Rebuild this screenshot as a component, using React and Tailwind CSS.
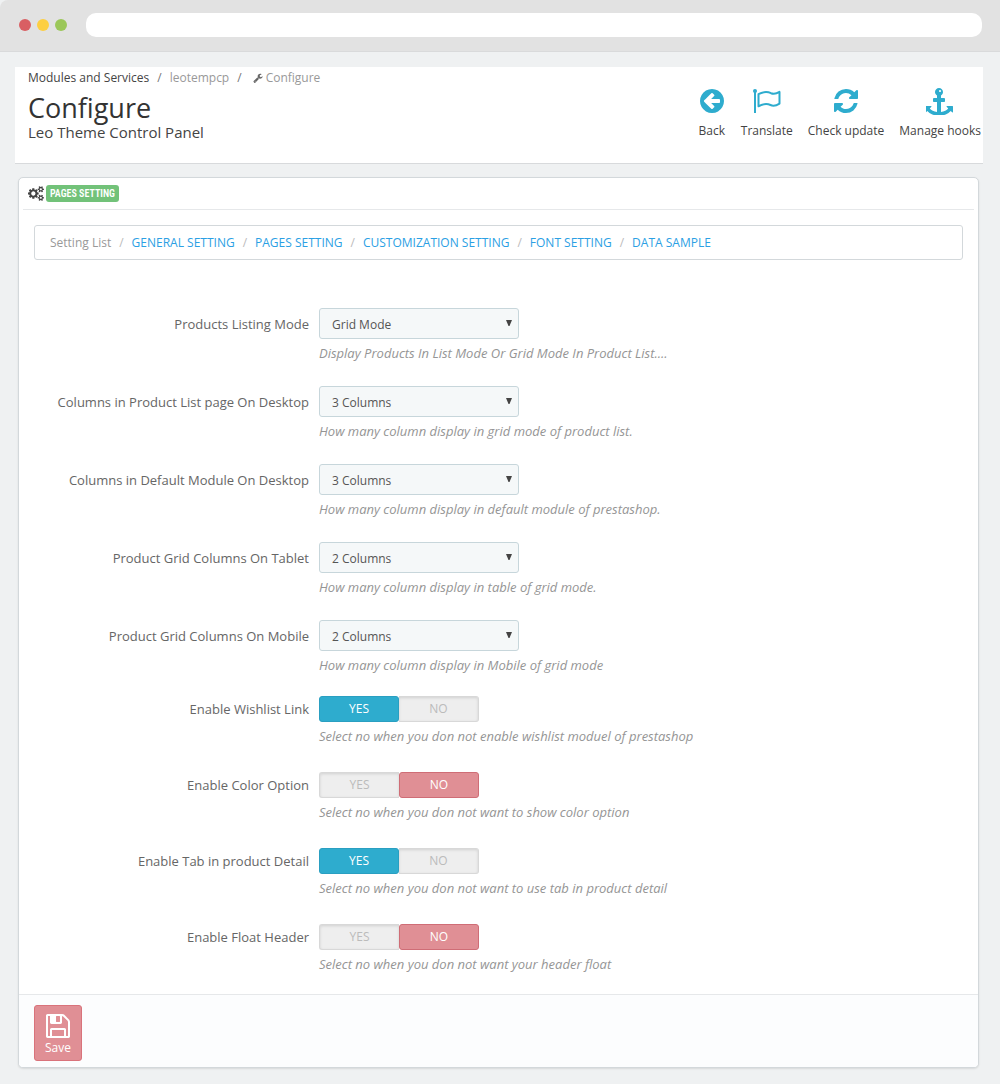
import { useState } from "react";

const ICON_PATHS = {
    back: "M1408 960v-128q0-26-19-45t-45-19h-502l189-189q19-19 19-45t-19-45l-91-91q-18-18-45-18t-45 18l-362 362-91 91q-18 18-18 45t18 45l91 91 362 362q18 18 45 18t45-18l91-91q18-18 18-45t-18-45l-189-189h502q26 0 45-19t19-45zm256-64q0 209-103 385.5t-279.5 279.5-385.5 103-385.5-103-279.5-279.5-103-385.5 103-385.5 279.5-279.5 385.5-103 385.5 103 279.5 279.5 103 385.5z",
    refresh: "M1639 1056q0 5-1 7-64 268-268 434.5t-478 166.5q-146 0-282.5-55t-243.5-157l-129 129q-19 19-45 19t-45-19-19-45v-448q0-26 19-45t45-19h448q26 0 45 19t19 45-19 45l-137 137q71 66 161 102t187 36q134 0 250-65t186-179q11-17 53-117 8-23 30-23h192q13 0 22.5 9.5t9.5 22.5zm25-800v448q0 26-19 45t-45 19h-448q-26 0-45-19t-19-45 19-45l138-138q-148-137-349-137-134 0-250 65t-186 179q-11 17-53 117-8 23-30 23h-199q-13 0-22.5-9.5t-9.5-22.5v-7q65-268 270-434.5t480-166.5q146 0 284 55.5t245 156.5l130-129q19-19 45-19t45 19 19 45z",
    anchor: "M960 256q0-26-19-45t-45-19-45 19-19 45 19 45 45 19 45-19 19-45zm768 992v352q0 22-20 30-8 2-12 2-12 0-23-9l-93-93q-119 143-318.5 226.5t-429.5 83.5-429.5-83.5-318.5-226.5l-93 93q-9 9-23 9-4 0-12-2-20-8-20-30v-352q0-14 9-23t23-9h352q22 0 30 20 8 19-7 35l-100 100q67 91 189.5 153.5t271.5 82.5v-647h-192q-26 0-45-19t-19-45v-128q0-26 19-45t45-19h192v-163q-58-34-93-92.5t-35-128.5q0-106 75-181t181-75 181 75 75 181q0 70-35 128.5t-93 92.5v163h192q26 0 45 19t19 45v128q0 26-19 45t-45 19h-192v647q149-20 271.5-82.5t189.5-153.5l-100-100q-15-16-7-35 8-20 30-20h352q14 0 23 9t9 23z",
    save: "M512 1536h768v-384h-768v384zm896 0h128v-896q0-14-10-38.5t-20-34.5l-281-281q-10-10-34-20t-39-10v416q0 40-28 68t-68 28h-576q-40 0-68-28t-28-68v-416h-128v1280h128v-416q0-40 28-68t68-28h832q40 0 68 28t28 68v416zm-384-928v-320q0-13-9.5-22.5t-22.5-9.5h-192q-13 0-22.5 9.5t-9.5 22.5v320q0 13 9.5 22.5t22.5 9.5h192q13 0 22.5-9.5t9.5-22.5zm640 32v928q0 40-28 68t-68 28h-1344q-40 0-68-28t-28-68v-1344q0-40 28-68t68-28h928q40 0 88 20t76 48l280 280q28 28 48 76t20 88z",
    wrench: "M448 1472q0-26-19-45t-45-19-45 19-19 45 19 45 45 19 45-19 19-45zm644-420l-682 682q-37 37-90 37-52 0-91-37l-106-108q-38-36-38-90 0-53 38-91l681-681q39 98 114.5 173.5t173.5 114.5zm634-435q0 39-23 106-47 134-164.5 217.5t-258.5 83.5q-185 0-316.5-131.5t-131.5-316.5 131.5-316.5 316.5-131.5q58 0 121.5 16.5t107.5 46.5q16 11 16 28t-16 28l-293 169v224l193 107q5-3 79-48.5t135.5-81 70.5-35.5q15 0 23.5 10t8.500 25z",
    cogs: "M896 896q0-106-75-181t-181-75-181 75-75 181 75 181 181 75 181-75 75-181zm768 512q0-52-38-90t-90-38-90 38-38 90q0 53 37.5 90.5t90.5 37.5 90.5-37.5 37.5-90.5zm0-1024q0-52-38-90t-90-38-90 38-38 90q0 53 37.5 90.5t90.5 37.5 90.5-37.5 37.5-90.5zm-384 421v185q0 10-7 19.5t-16 10.5l-155 24q-11 35-32 76 34 48 90 115 7 11 7 20 0 12-7 19-23 30-82.5 89.5t-78.5 59.5q-11 0-21-7l-115-90q-37 19-77 31-11 108-23 155-7 24-30 24h-186q-11 0-20-7.5t-10-17.5l-23-153q-34-10-75-31l-118 89q-7 7-20 7-11 0-21-8-144-133-144-160 0-9 7-19 10-14 41-53t47-61q-23-44-35-82l-152-24q-10-1-17-9.5t-7-19.5v-185q0-10 7-19.5t16-10.5l155-24q11-35 32-76-34-48-90-115-7-11-7-20 0-12 7-20 22-30 82-89t79-59q11 0 21 7l115 90q34-18 77-32 11-108 23-154 7-24 30-24h186q11 0 20 7.5t10 17.5l23 153q34 10 75 31l118-89q8-7 20-7 11 0 21 8 144 133 144 160 0 8-7 19-12 16-42 54t-45 60q23 48 34 82l152 23q10 2 17 10.5t7 19.5zm640 533v140q0 16-149 31-12 27-30 52 51 113 51 138 0 4-4 7-122 71-124 71-8 0-46-47t-52-68q-20 2-30 2t-30-2q-14 21-52 68t-46 47q-2 0-124-71-4-3-4-7 0-25 51-138-18-25-30-52-149-15-149-31v-140q0-16 149-31 13-29 30-52-51-113-51-138 0-4 4-7 4-2 35-20t59-34 30-16q8 0 46 46.5t52 67.5q20-2 30-2t30 2q51-71 92-112l6-2q4 0 124 70 4 3 4 7 0 25-51 138 17 23 30 52 149 15 149 31zm0-1024v140q0 16-149 31-12 27-30 52 51 113 51 138 0 4-4 7-122 71-124 71-8 0-46-47t-52-68q-20 2-30 2t-30-2q-14 21-52 68t-46 47q-2 0-124-71-4-3-4-7 0-25 51-138-18-25-30-52-149-15-149-31v-140q0-16 149-31 13-29 30-52-51-113-51-138 0-4 4-7 4-2 35-20t59-34 30-16q8 0 46 46.5t52 67.5q20-2 30-2t30 2q51-71 92-112l6-2q4 0 124 70 4 3 4 7 0 25-51 138 17 23 30 52 149 15 149 31z",
};

function Icon({ name, className, viewBox = "0 0 1792 1792" }) {
    return (
        <svg viewBox={viewBox} fill="currentColor" aria-hidden="true" className={className}>
            <path d={ICON_PATHS[name]} />
        </svg>
    );
}

function FlagIcon() {
    return (
        <svg viewBox="0 0 28 28" fill="none" stroke="currentColor" aria-hidden="true" className="h-7 w-7">
            <circle cx="2" cy="4" r="2" fill="currentColor" stroke="none" />
            <path d="M2 4v22" strokeWidth="2" />
            <path
                d="M5.5 7.2c6-3.200 9-2.600 12.500-1 3 1.200 5.500.500 8.500-1.300v11.700c-3.500 2.200-6 2.800-9 1.400-3.500-1.500-6.500-1.700-12 1.300z"
                strokeWidth="2"
                strokeLinejoin="round"
            />
        </svg>
    );
}

const toolbar = [
    { label: "Back", icon: <Icon name="back" className="h-7 w-7" /> },
    { label: "Translate", icon: <FlagIcon /> },
    { label: "Check update", icon: <Icon name="refresh" className="h-7 w-7" /> },
    { label: "Manage hooks", icon: <Icon name="anchor" className="h-7 w-7" /> },
];

const settingLinks = [
    "GENERAL SETTING",
    "PAGES SETTING",
    "CUSTOMIZATION SETTING",
    "FONT SETTING",
    "DATA SAMPLE",
];

const columnOptions = ["2 Columns", "3 Columns"];

const selectFields = [
    {
        id: "listing_mode",
        label: "Products Listing Mode",
        value: "Grid Mode",
        options: ["Grid Mode"],
        help: "Display Products In List Mode Or Grid Mode In Product List....",
    },
    {
        id: "list_desktop",
        label: "Columns in Product List page On Desktop",
        value: "3 Columns",
        options: columnOptions,
        help: "How many column display in grid mode of product list.",
    },
    {
        id: "module_desktop",
        label: "Columns in Default Module On Desktop",
        value: "3 Columns",
        options: columnOptions,
        help: "How many column display in default module of prestashop.",
    },
    {
        id: "grid_tablet",
        label: "Product Grid Columns On Tablet",
        value: "2 Columns",
        options: columnOptions,
        help: "How many column display in table of grid mode.",
    },
    {
        id: "grid_mobile",
        label: "Product Grid Columns On Mobile",
        value: "2 Columns",
        options: columnOptions,
        help: "How many column display in Mobile of grid mode",
    },
];

const switchFields = [
    {
        id: "wishlist",
        label: "Enable Wishlist Link",
        value: true,
        help: "Select no when you don not enable wishlist moduel of prestashop",
    },
    {
        id: "color_option",
        label: "Enable Color Option",
        value: false,
        help: "Select no when you don not want to show color option",
    },
    {
        id: "product_tab",
        label: "Enable Tab in product Detail",
        value: true,
        help: "Select no when you don not want to use tab in product detail",
    },
    {
        id: "float_header",
        label: "Enable Float Header",
        value: false,
        help: "Select no when you don not want your header float",
    },
];

function HelpText({ children }) {
    return <p className="mt-1 text-[13px] leading-5 text-[#959595] italic">{children}</p>;
}

function SelectRow({ field }) {
    return (
        <div className="flex gap-2.5">
            <label
                htmlFor={field.id}
                className="w-[275px] shrink-0 text-right text-[13px] leading-8 whitespace-nowrap text-[#666]"
            >
                {field.label}
            </label>
            <div>
                <div className="relative w-[200px]">
                    <select
                        id={field.id}
                        defaultValue={field.value}
                        className="block h-[31px] w-full appearance-none rounded-[3px] border border-[#c7d6db] bg-[#f5f8f9] px-3 pt-0.5 text-xs text-[#555]"
                    >
                        {field.options.map((option) => (
                            <option key={option}>{option}</option>
                        ))}
                    </select>
                    <svg
                        viewBox="0 0 6 6"
                        aria-hidden="true"
                        className="pointer-events-none absolute top-3 right-[7px] h-1.5 w-1.5 fill-[#444]"
                    >
                        <path d="M0 0h6L3.500 6h-1z" />
                    </svg>
                </div>
                <HelpText>{field.help}</HelpText>
            </div>
        </div>
    );
}

const offStyle =
    "border-[#d8d8d8] bg-[#eee] text-[#bbb] shadow-[inset_0_1px_3px_rgba(0,0,0,0.12)]";

function SwitchRow({ field }) {
    const [enabled, setEnabled] = useState(field.value);

    return (
        <div role="radiogroup" aria-labelledby={field.id} className="flex gap-2.5">
            <span
                id={field.id}
                className="w-[275px] shrink-0 text-right text-[13px] leading-[26px] whitespace-nowrap text-[#666]"
            >
                {field.label}
            </span>
            <div>
                <div className="flex h-[26px] w-40 text-center text-xs leading-6">
                    <label
                        className={`relative w-1/2 cursor-pointer border ${enabled
                            ? "rounded-[3px] border-[#2a9fc1] bg-[#2eacce] text-white"
                            : `rounded-l-[3px] border-r-0 ${offStyle}`
                            }`}
                    >
                        <input
                            type="radio"
                            name={field.id}
                            className="sr-only"
                            checked={enabled}
                            onChange={() => setEnabled(true)}
                        />
                        YES
                    </label>
                    <label
                        className={`relative w-1/2 cursor-pointer border ${enabled
                            ? `rounded-r-[3px] border-l-0 ${offStyle}`
                            : "rounded-[3px] border-[#cf6d76] bg-[#e08f95] text-white"
                            }`}
                    >
                        <input
                            type="radio"
                            name={field.id}
                            className="sr-only"
                            checked={!enabled}
                            onChange={() => setEnabled(false)}
                        />
                        NO
                    </label>
                </div>
                <HelpText>{field.help}</HelpText>
            </div>
        </div>
    );
}

function BrowserBar() {
    return (
        <div className="flex items-center rounded-tl-lg border-b border-[#d9dadb] bg-[#e2e2e2] pt-[13px] pr-[18px] pb-3.5 pl-[19px]">
            <div className="flex gap-1.5">
                <span className="h-3 w-3 rounded-full bg-[#d95f63]" />
                <span className="h-3 w-3 rounded-full bg-[#fdcf42]" />
                <span className="h-3 w-3 rounded-full bg-[#9bc759]" />
            </div>
            <input
                type="text"
                aria-label="Address"
                className="ml-[19px] h-6 min-w-0 flex-1 rounded-[10px] bg-white px-3 text-xs"
            />
        </div>
    );
}

function PageHeader() {
    return (
        <header className="mr-[17px] ml-[15px] flex items-start justify-between border-b border-[#d8dadc] bg-white pr-0.5 pb-[22px] pl-[13px]">
            <div>
                <nav className="flex h-[22px] items-center text-xs text-[#999]">
                    <a href="#modules" className="text-[#444]">Modules and Services</a>
                    <span className="mx-2 text-[#777]">/</span>
                    <a href="#leotempcp">leotempcp</a>
                    <span className="mx-2 text-[#777]">/</span>
                    <Icon name="wrench" className="mx-[3px] h-2.5 w-2.5 text-[#666]" />
                    <span>Configure</span>
                </nav>
                <h1 className="mt-[3px] text-[27px] leading-8 text-[#333]">Configure</h1>
                <p className="text-[15px] leading-[17px] text-[#444]">Leo Theme Control Panel</p>
            </div>
            <div className="flex gap-[15px] pt-5">
                {toolbar.map((item) => (
                    <button
                        key={item.label}
                        type="button"
                        className="flex cursor-pointer flex-col items-center text-[#2eacce]"
                    >
                        {item.icon}
                        <span className="mt-1.5 text-xs leading-5 whitespace-nowrap text-[#444]">
                            {item.label}
                        </span>
                    </button>
                ))}
            </div>
        </header>
    );
}

export default function App() {
    return (
        <div className="min-h-screen bg-[#eff1f2] pb-4 font-['Open_Sans',sans-serif]">
            <BrowserBar />
            <div className="pt-[15px]">
                <PageHeader />
            </div>

            <main className="mt-[13px] mr-[21px] ml-[18px] overflow-hidden rounded-[5px] border border-[#d3d8db] bg-white shadow-[0_1px_2px_rgba(0,0,0,0.1)]">
                <div className="mx-1 flex h-8 items-center border-b border-[#e6e8ea] pl-[5px]">
                    <Icon name="cogs" viewBox="0 0 1920 1792" className="h-[15px] w-4 text-[#444]" />
                    <h2 className="ml-0.5 rounded-[3px] bg-[#72c279] px-1 font-['Ubuntu_Condensed','Roboto_Condensed','Open_Sans_Condensed',Roboto,sans-serif] text-[10px] leading-[17px] font-semibold text-white">
                        PAGES SETTING
                    </h2>
                </div>

                <form onSubmit={(e) => e.preventDefault()}>
                    <nav className="mx-[15px] mt-[15px] flex h-[35px] items-center rounded-[3px] border border-[#d3d8db] px-[15px] text-xs whitespace-nowrap text-[#999]">
                        <span>Setting List</span>
                        {settingLinks.map((link) => (
                            <span key={link}>
                                <span className="mx-2 text-[#bbb]">/</span>
                                <a href="#settings" className="text-[#2ba0e4]">{link}</a>
                            </span>
                        ))}
                    </nav>

                    <div className="mt-12 flex flex-col gap-[23px] px-[15px]">
                        {selectFields.map((field) => (
                            <SelectRow key={field.id} field={field} />
                        ))}
                    </div>
                    <div className="mt-[21px] flex flex-col gap-[26px] px-[15px] pb-5">
                        {switchFields.map((field) => (
                            <SwitchRow key={field.id} field={field} />
                        ))}
                    </div>

                    <div className="border-t border-[#e6e8ea] bg-[#fcfdfe] px-[15px] pt-2.5 pb-1.5">
                        <button
                            type="submit"
                            className="flex h-14 w-12 cursor-pointer flex-col items-center rounded-[3px] border border-[#d9737b] bg-[#e08f95] pt-1.5 text-xs text-white"
                        >
                            <Icon name="save" className="h-7 w-7" />
                            <span className="leading-4">Save</span>
                        </button>
                    </div>
                </form>
            </main>
        </div>
    );
}
